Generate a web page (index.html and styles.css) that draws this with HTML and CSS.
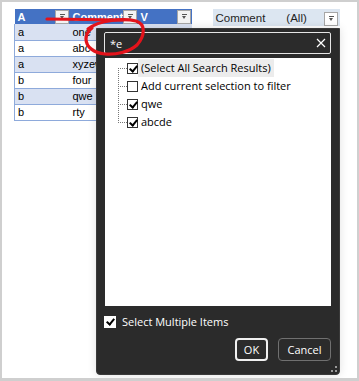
FILE: index.html
```html
<!DOCTYPE html>
<html lang="en">
<head>
  <meta charset="UTF-8">
  <title>Filter search</title>
  <link rel="stylesheet" href="styles.css">
</head>
<body>
  <div class="frame">
    <div class="sheet">
      <table class="grid">
        <tr class="head">
          <th class="col-a">A<span class="fbtn"></span></th>
          <th class="col-c">Comment<span class="fbtn"></span></th>
          <th class="col-v">V<span class="fbtn"></span></th>
        </tr>
        <tr class="band"><td>a</td><td>one</td><td></td></tr>
        <tr><td>a</td><td>abc</td><td></td></tr>
        <tr class="band"><td>a</td><td>xyzew</td><td></td></tr>
        <tr><td>b</td><td>four</td><td></td></tr>
        <tr class="band"><td>b</td><td>qwe</td><td></td></tr>
        <tr><td>b</td><td>rty</td><td></td></tr>
      </table>

      <div class="pivot">
        <span class="pv-name">Comment</span>
        <span class="pv-val">(All)</span>
        <span class="fbtn plain"></span>
      </div>
    </div>

    <div class="dialog">
      <div class="search">
        <span class="query">*e</span>
        <svg class="clear" width="10" height="10" viewBox="0 0 10 10"><path d="M1 1L9 9M9 1L1 9" stroke="#fff" stroke-width="1.2"/></svg>
      </div>

      <div class="list">
        <ul class="tree">
          <li class="hl"><span class="cb on"></span><span class="lbl">(Select All Search Results)</span></li>
          <li><span class="cb"></span><span class="lbl">Add current selection to filter</span></li>
          <li><span class="cb on"></span><span class="lbl">qwe</span></li>
          <li><span class="cb on"></span><span class="lbl">abcde</span></li>
        </ul>
      </div>

      <label class="multi"><span class="cb on white"></span>Select Multiple Items</label>

      <div class="actions">
        <button class="btn primary">OK</button>
        <button class="btn">Cancel</button>
      </div>

      <div class="grip">
        <i></i><i></i><i></i>
      </div>
    </div>

    <!-- red marker scribble -->
    <svg class="ink" width="355" height="376" viewBox="0 0 355 376">
      <path d="M45 17 L121 18" />
      <path d="M86 27 C97 18 122 16 134 19 C144 22 143 34 135 43 C127 50 114 53 103 52 C92 51 84 45 84 37 C84 32 86 29 90 26" />
    </svg>
  </div>
</body>
</html>
```

FILE: styles.css
```css
* { box-sizing: border-box; }
body { margin: 0; background: #fff; }

.frame {
  position: relative;
  width: 359px;
  height: 381px;
  border: 2px solid #cfcfcf;
  border-bottom-width: 3px;
  background: #fff;
  overflow: hidden;
}

.sheet { display: flex; align-items: flex-start; padding: 7px 0 0 12px; }

.grid {
  border-collapse: collapse;
  font-family: "Liberation Sans", Arial, sans-serif;
  font-size: 11px;
  color: #000;
}
.grid th, .grid td {
  height: 16px;
  padding: 0 3px;
  text-align: left;
  white-space: nowrap;
  border-bottom: 1px solid #8eaadb;
}
.grid td:first-child { border-left: 1px solid #8eaadb; }
.grid .head th {
  height: 15px;
  background: #4472c4;
  color: #fff;
  font-weight: bold;
  border-bottom: 0;
  position: relative;
}
.grid .band td { background: #d9e1f2; }
.col-a { width: 55px; }
.col-c { width: 68px; }
.col-v { width: 54px; }

.fbtn {
  position: absolute;
  right: 1px;
  top: 1px;
  width: 14px;
  height: 14px;
  background: #f3f3f3;
  border: 1px solid #a6a6a6;
}
.fbtn::after {
  content: "";
  position: absolute;
  left: 4px;
  top: 5px;
  border-left: 2.5px solid transparent;
  border-right: 2.5px solid transparent;
  border-top: 3px solid #555;
}
.fbtn::before {
  content: "";
  position: absolute;
  left: 4px;
  top: 3px;
  width: 5px;
  height: 1px;
  background: #555;
}
.fbtn.plain { position: relative; display: block; margin-left: auto; background: #fff; }

.pivot {
  display: flex;
  align-items: center;
  width: 127px;
  height: 17px;
  margin-left: 21px;
  padding: 0 1px 0 3px;
  background: #dce6f1;
  font-family: "Liberation Sans", Arial, sans-serif;
  font-size: 11.5px;
  color: #1f1f1f;
}
.pv-val { margin-left: 21px; }

/* filter dialog */
.dialog {
  position: absolute;
  left: 94px;
  top: 26px;
  width: 244px;
  height: 347px;
  display: flex;
  flex-direction: column;
  padding: 3px 8px 0 7px;
  background: #2b2b2b;
  border: 1px solid #3a3a3a;
  border-radius: 0 0 4px 4px;
  box-shadow: 0 0 10px rgba(0, 0, 0, 0.12);
  font-family: "Open Sans", "Noto Sans", sans-serif;
  font-size: 11px;
  color: #fff;
}

.search {
  display: flex;
  align-items: center;
  justify-content: space-between;
  height: 22px;
  padding: 0 4px 0 5px;
  border: 1.5px solid #e6e6e6;
  border-radius: 2px;
}
.query { font-size: 11px; }

.list {
  height: 248px;
  margin-top: 4px;
  margin-left: 1px;
  background: #fff;
  color: #000;
}
.tree {
  position: relative;
  list-style: none;
  margin: 0;
  padding: 1px 0 0 22px;
}
.tree::before {
  content: "";
  position: absolute;
  left: 13px;
  top: 10px;
  bottom: 8px;
  border-left: 1px dotted #777;
}
.tree li {
  position: relative;
  display: flex;
  align-items: center;
  height: 18px;
}
.tree li::before {
  content: "";
  position: absolute;
  left: -9px;
  top: 9px;
  width: 9px;
  border-top: 1px dotted #777;
}
.tree .lbl { padding: 0 3px 0 3px; height: 18px; line-height: 18px; }
.tree .hl .lbl { background: #ececec; }

.cb {
  position: relative;
  display: inline-block;
  width: 11px;
  height: 11px;
  border: 1px solid #333;
  background: #fff;
  flex: none;
}
.cb.on::after {
  content: "";
  position: absolute;
  left: 3px;
  top: 0;
  width: 3px;
  height: 6px;
  border: solid #000;
  border-width: 0 2px 2px 0;
  transform: rotate(40deg);
}

.multi {
  display: flex;
  align-items: center;
  gap: 6px;
  margin-top: 8px;
  font-size: 11px;
}
.cb.white { width: 12px; height: 12px; border-color: #fff; }

.actions {
  display: flex;
  justify-content: flex-end;
  gap: 10px;
  margin-top: 9px;
}
.btn {
  height: 23px;
  padding: 0 6px;
  background: #2b2b2b;
  color: #fff;
  border: 1px solid #707070;
  border-radius: 4px;
  font-family: "Open Sans", "Noto Sans", sans-serif;
  font-size: 11px;
}
.btn.primary { width: 33px; border: 2px solid #f0f0f0; padding: 0; }
.btn:last-child { width: 53px; }

.grip {
  position: absolute;
  right: 2px;
  bottom: 2px;
  width: 6px;
  height: 6px;
}
.grip i { position: absolute; width: 2px; height: 2px; background: #9a9a9a; }
.grip i:nth-child(1) { right: 0; top: 0; }
.grip i:nth-child(2) { right: 0; bottom: 0; }
.grip i:nth-child(3) { left: 0; bottom: 0; }

.ink {
  position: absolute;
  left: 0;
  top: 0;
  pointer-events: none;
}
.ink path { fill: none; stroke: #e3131b; stroke-width: 3.2; stroke-linecap: round; }
```
